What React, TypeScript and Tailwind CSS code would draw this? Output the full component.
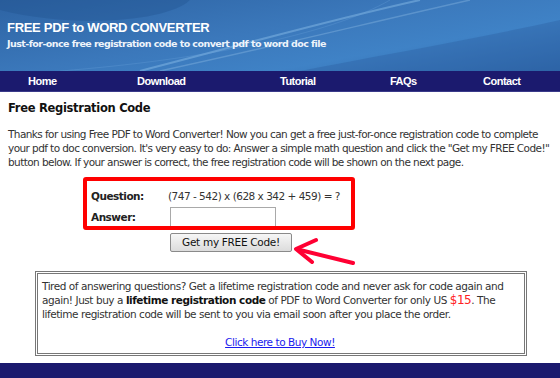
import React from 'react';

const navItems = [
  { label: 'Home', w: 'w-[109px]' },
  { label: 'Download', w: 'w-[143px]' },
  { label: 'Tutorial', w: 'w-[110px]' },
  { label: 'FAQs', w: 'w-[93px]' },
  { label: 'Contact', w: 'w-[60px]' },
];

const Header: React.FC = () => (
  <div className="relative h-[71px] overflow-hidden bg-[linear-gradient(170deg,#2d63a3_0%,#3b78bb_45%,#3f82c6_70%,#2f68ab_100%)]">
    <svg className="absolute inset-0" width="560" height="71" viewBox="0 0 560 71">
      <path d="M140 71 C 260 40, 330 20, 420 0" stroke="#8fc0ea" strokeOpacity="0.45" strokeWidth="2" fill="none" />
      <path d="M160 71 C 280 45, 360 25, 470 0" stroke="#a6ccf0" strokeOpacity="0.3" strokeWidth="1.5" fill="none" />
      <path d="M0 10 C 80 30, 170 20, 190 0 L 0 0 Z" fill="#1f4f8c" fillOpacity="0.35" />
      <path d="M300 71 C 380 55, 470 40, 560 20 L 560 71 Z" fill="#2a5d9e" fillOpacity="0.35" />
      <path d="M60 71 C 200 60, 330 35, 390 0" stroke="#6aa3db" strokeOpacity="0.3" strokeWidth="1" fill="none" />
    </svg>
    <div className="relative pl-[7px] pt-[19px]">
      <div className="font-['Liberation_Sans',sans-serif] text-[13px] font-bold leading-[18px] tracking-[-0.3px] text-white">
        FREE PDF to WORD CONVERTER
      </div>
      <div className="text-[9.5px] font-bold leading-[14px] tracking-[-0.55px] text-[#eef4fb]">
        Just-for-once free registration code to convert pdf to word doc file
      </div>
    </div>
  </div>
);

export default function App() {
  return (
    <div className="relative h-[378px] w-[560px] overflow-hidden bg-white font-['DejaVu_Sans',sans-serif] text-[#333]">
      <Header />
      <div className="flex h-[21px] items-center border-b border-[#3a3a8a] bg-[#1b1a6e] pl-[28px] font-['Liberation_Sans',sans-serif] text-[11px] font-bold tracking-[-0.5px] text-white">
        {navItems.map((n) => (
          <div key={n.label} className={n.w}>
            {n.label}
          </div>
        ))}
      </div>

      <div className="px-[8px] pt-[8px]">
        <h1 className="text-[11.5px] font-bold leading-[16px] tracking-[-0.3px] text-[#111]">Free Registration Code</h1>
        <p className="mt-[11px] text-[10.5px] leading-[14px] tracking-[-0.58px]">
          Thanks for using Free PDF to Word Converter! Now you can get a free just-for-once registration code to complete
          your pdf to doc conversion. It's very easy to do: Answer a simple math question and click the "Get my FREE Code!"
          button below. If your answer is correct, the free registration code will be shown on the next page.
        </p>

        <div className="mt-[18px] ml-[83px] text-[10.5px] tracking-[-0.5px]">
          <div className="flex h-[20px] items-center">
            <span className="w-[77px] font-bold text-[#222]">Question:</span>
            <span>(747 - 542) x (628 x 342 + 459) = ?</span>
          </div>
          <div className="flex h-[22px] items-center">
            <span className="w-[79px] font-bold text-[#222]">Answer:</span>
            <input className="h-[23px] w-[106px] border border-[#a9a9a9] bg-white outline-none" />
          </div>
          <button className="mt-[4px] ml-[79px] h-[19px] w-[122px] rounded-[2px] border border-[#8a8a8a] bg-[linear-gradient(#f6f6f6,#dcdcdc)] text-[10.5px] leading-[17px] tracking-[-0.3px] text-[#111]">
            Get my FREE Code!
          </button>
        </div>
      </div>

      <div className="ml-[35px] mt-[19px] h-[85px] w-[492px] border-[3px] border-double border-[#777] pl-[4px] pr-[6px] pt-[5px] text-[10.5px] leading-[14px] tracking-[-0.45px]">
        <p>
          Tired of answering questions? Get a lifetime registration code and never ask for code again and again! Just buy
          a <b className="text-[#111]">lifetime registration code</b> of PDF to Word Converter for only US{' '}
          <span className="text-[12px] leading-none text-[#ff2222]">$15</span>. The lifetime registration code will be sent to
          you via email soon after you place the order.
        </p>
        <div className="mt-[14px] text-center">
          <a href="#" className="text-[#1a1aee] underline">Click here to Buy Now!</a>
        </div>
      </div>

      <div className="absolute bottom-0 left-0 h-[15px] w-full bg-[#1b1a6e]" />

      {/* red annotation */}
      <div className="pointer-events-none absolute left-[83px] top-[177px] h-[53px] w-[272px] rounded-[3px] border-[4px] border-[#ff0000]" />
      <svg className="pointer-events-none absolute left-0 top-0" width="560" height="378">
        <path d="M353 263 L300 250" stroke="#ff0033" strokeWidth="4" strokeLinecap="round" />
        <path d="M316 240 L296 249 L312 262" stroke="#ff0033" strokeWidth="4" strokeLinecap="round" strokeLinejoin="round" fill="none" />
      </svg>
    </div>
  );
}
